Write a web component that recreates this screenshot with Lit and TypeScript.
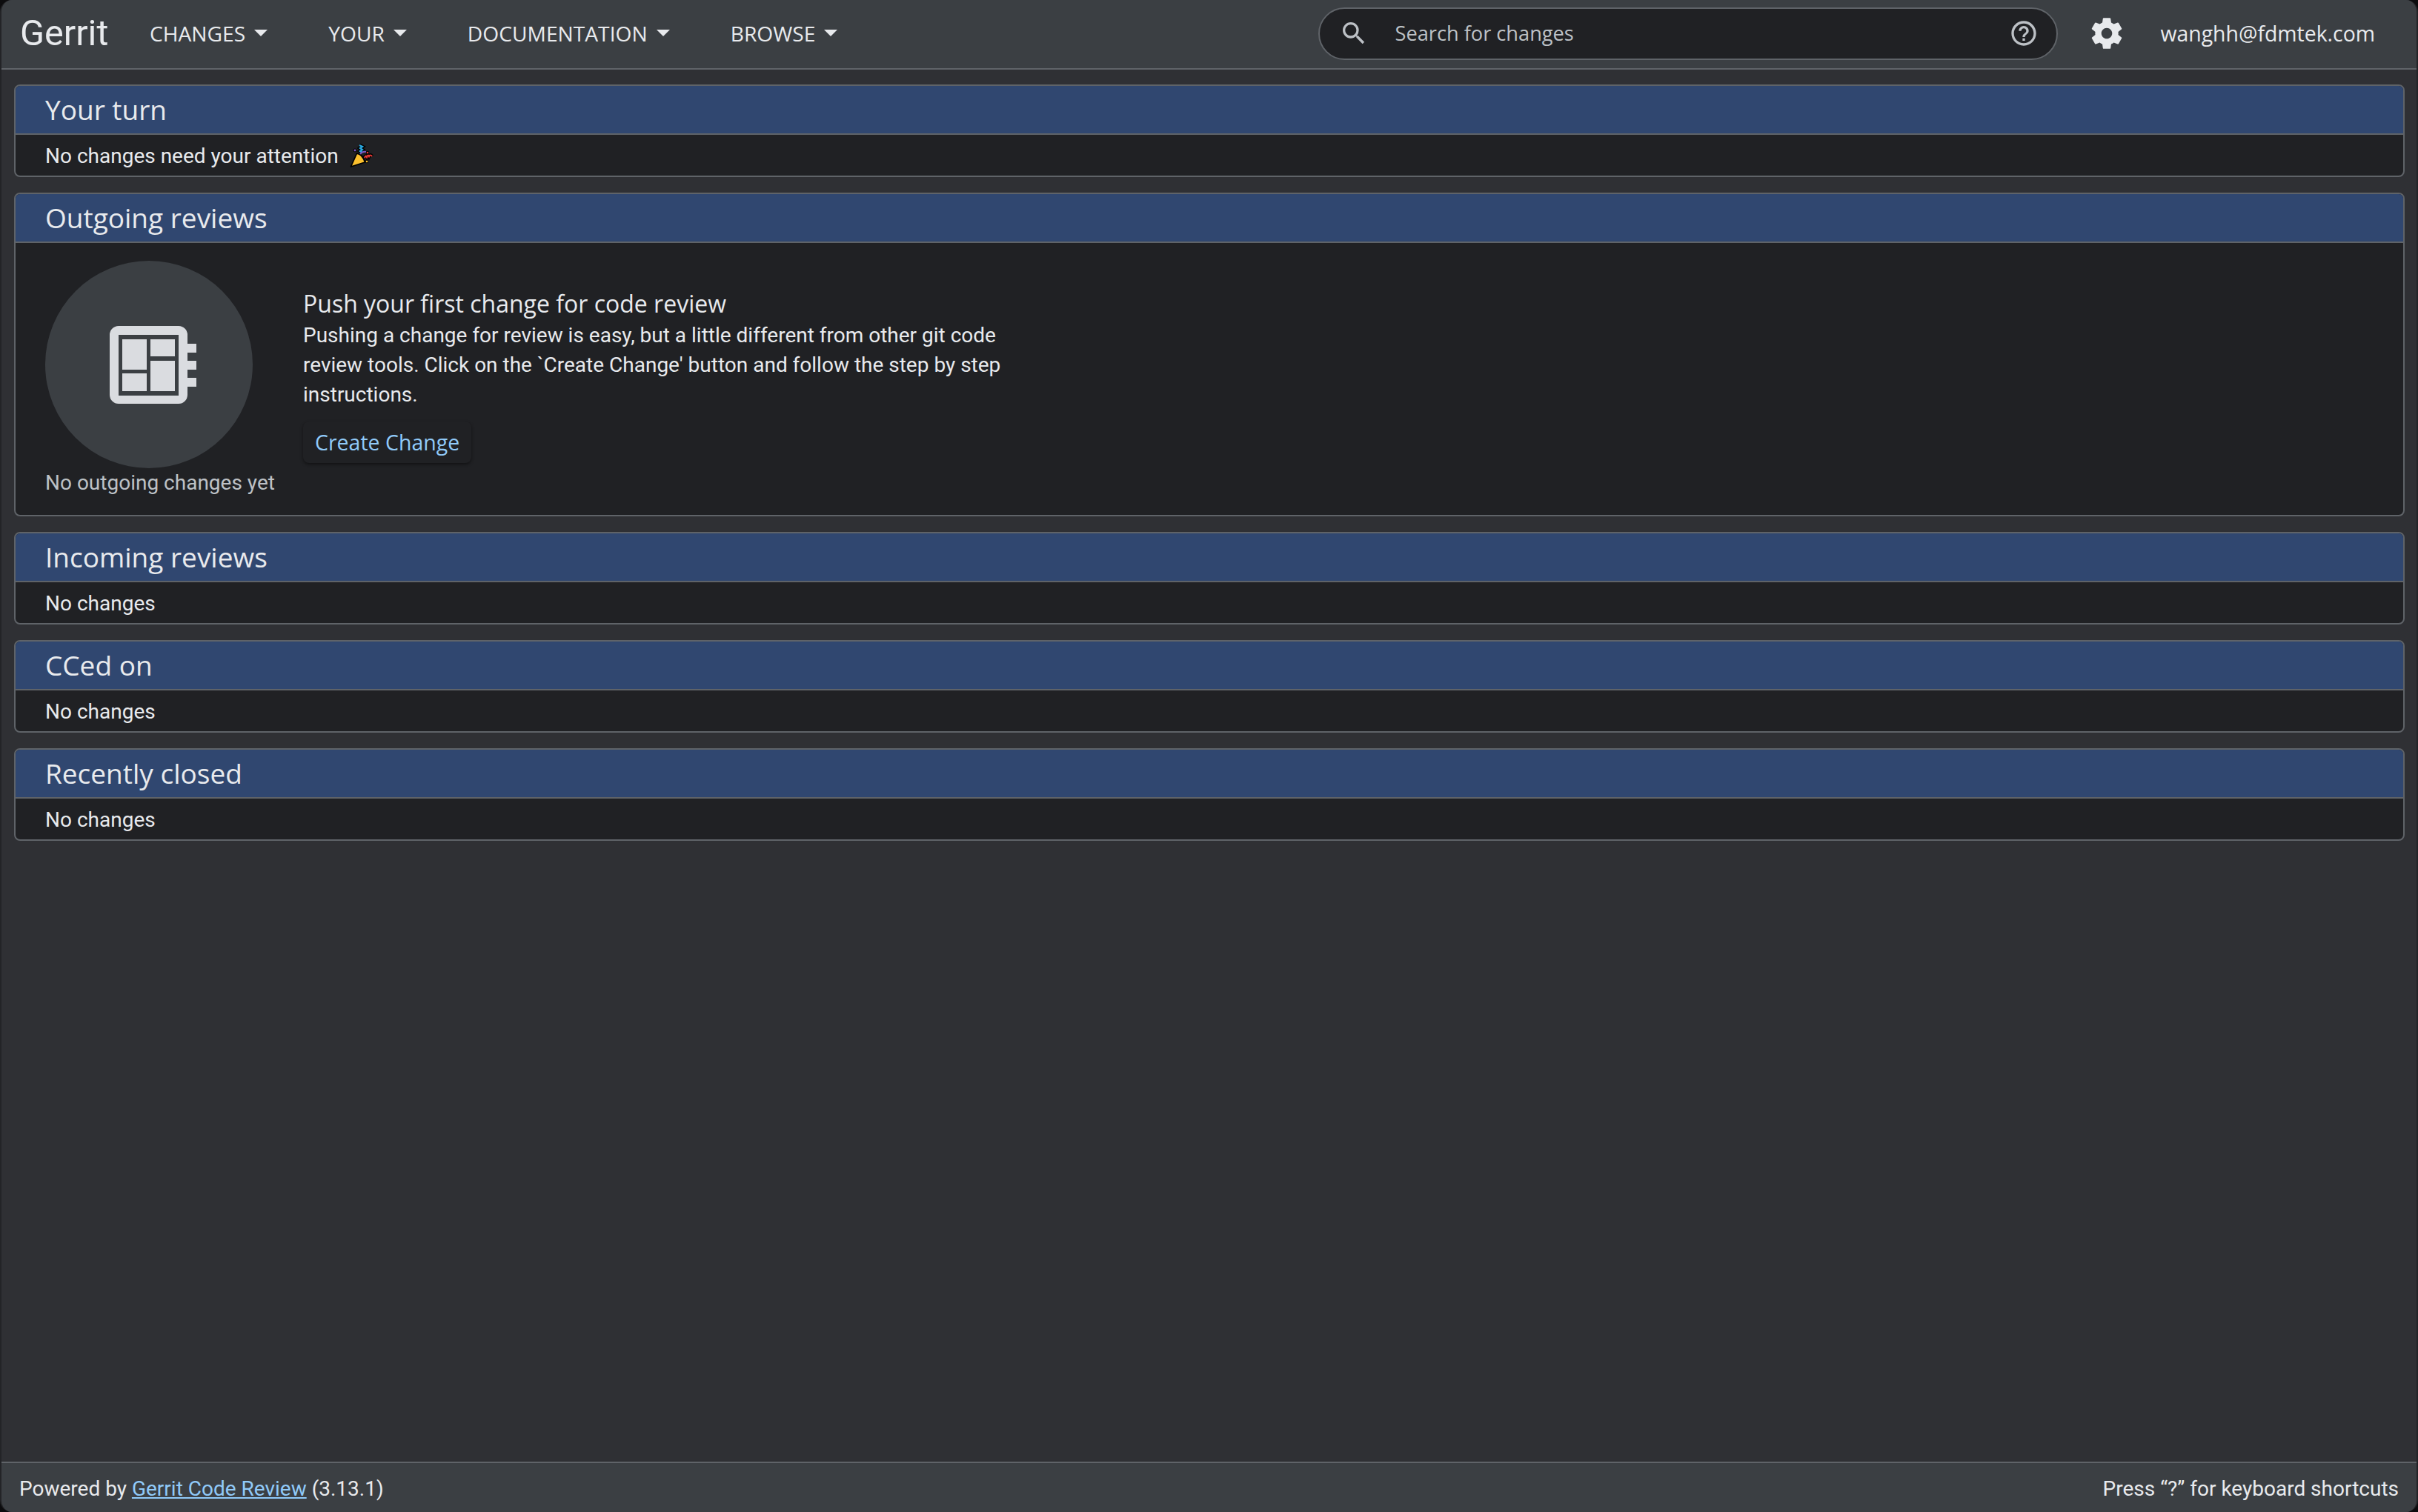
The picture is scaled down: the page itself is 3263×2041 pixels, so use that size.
import { LitElement, html, css, svg } from "lit";
import { customElement } from "lit/decorators.js";

const caret = html`<span class="caret"></span>`;

const noChanges = (title: string) => html`
  <section class="sec">
    <h2>${title}</h2>
    <div class="row">No changes</div>
  </section>`;

@customElement("app-root")
export class AppRoot extends LitElement {
  static styles = css`
    :host { display: block; background: #0c0c0e; }
    * { box-sizing: border-box; }
    .win {
      height: 2041px; display: flex; flex-direction: column; overflow: hidden;
      background: #2f3034; border-radius: 16px; color: #e8eaed;
      border-left: 2px solid #232427; border-right: 2px solid #232427;
      font: 400 28px/40px Roboto, sans-serif;
    }
    header {
      height: 94px; flex: none; display: flex; align-items: center;
      background: #3b3f43; border-bottom: 2px solid #5f6368; padding: 0 56px 2px 25px;
    }
    .logo { font: 400 48.5px/60px Roboto, sans-serif; width: 175px; color: #e8eaed; }
    .nav { display: flex; align-items: center; font: 400 28.2px/40px "Open Sans", sans-serif; }
    .nav span.item { display: flex; align-items: center; }
    .nav .item + .item { margin-left: 82px; }
    .caret {
      width: 0; height: 0; margin-left: 12px; margin-top: -2px;
      border-left: 9px solid transparent; border-right: 9px solid transparent; border-top: 9px solid #e8eaed;
    }
    .search {
      margin-left: auto; width: 998px; height: 71px; display: flex; align-items: center;
      background: #202124; border: 2px solid #5f6368; border-radius: 36px; padding: 0 24px 0 26px;
      color: #bdc1c6; font: 400 27.2px/40px "Open Sans", sans-serif;
    }
    .search svg { display: block; flex: none; }
    .search .ph { margin-left: 36px; flex: 1; }
    .gear { margin-left: 41px; display: block; flex: none; }
    .user { margin-left: 48px; font: 400 28.4px/40px "Open Sans", sans-serif; }
    main { flex: 1; padding: 20px 16px 0 17px; display: flex; flex-direction: column; gap: 21px; }
    .sec {
      border: 2px solid #5f6368; border-radius: 8px; background: #202124; overflow: hidden;
    }
    h2 {
      margin: 0; height: 66px; background: #304770; border-bottom: 2px solid #5f6368;
      padding: 0 40px; font: 400 37px/64px "Open Sans", sans-serif; color: #e8eaed;
    }
    .row { height: 55px; padding: 2px 40px 0; display: flex; align-items: center; }
    .party { margin-left: 15px; display: block; }
    .empty { display: flex; padding: 24px 40px 0; height: 367px; gap: 38px; }
    .side { width: 310px; flex: none; }
    .circle {
      width: 280px; height: 280px; border-radius: 50%; background: #3b3f43;
      display: flex; align-items: center; justify-content: center;
    }
    .circle svg { margin-left: 11px; display: block; }
    .side p { margin: 0; color: #bdc1c6; white-space: nowrap; }
    .copy { padding-top: 37px; width: 945px; }
    .copy h3 { margin: 0; font: 400 32px/42px "Open Sans", sans-serif; }
    .copy p { margin: 2px 0 0; font: 400 28px/40px Roboto, sans-serif; }
    .btn {
      display: inline-block; margin-top: 16px; padding: 0 16px; height: 56px;
      border-radius: 8px; background: #202124; color: #90caf9;
      font: 400 28.5px/56px "Open Sans", sans-serif;
      box-shadow: 0 2px 4px rgba(0,0,0,.45);
    }
    footer {
      height: 68px; flex: none; display: flex; justify-content: space-between; align-items: center;
      background: #3b3f43; border-top: 2px solid #5f6368; padding: 4px 24px 0 24px;
    }
    a { color: #90caf9; text-decoration: underline; }
  `;

  render() {
    return html`
      <div class="win">
        <header>
          <div class="logo">Gerrit</div>
          <div class="nav">
            <span class="item">CHANGES${caret}</span>
            <span class="item">YOUR${caret}</span>
            <span class="item">DOCUMENTATION${caret}</span>
            <span class="item">BROWSE${caret}</span>
          </div>
          <div class="search">
            <svg width="40" height="40" viewBox="0 0 24 24" fill="#bdc1c6"><path d="M15.5 14h-.79l-.28-.27A6.471 6.471 0 0 0 16 9.5 6.5 6.5 0 1 0 9.5 16c1.61 0 3.09-.59 4.23-1.57l.27.28v.79l5 4.99L20.49 19l-4.99-5zm-6 0C7.01 14 5 11.99 5 9.5S7.01 5 9.5 5 14 7.01 14 9.5 11.99 14 9.5 14z"/></svg>
            <span class="ph">Search for changes</span>
            <svg width="40" height="40" viewBox="0 0 24 24" fill="#bdc1c6"><path d="M11 18h2v-2h-2v2zm1-16C6.48 2 2 6.48 2 12s4.48 10 10 10 10-4.48 10-10S17.52 2 12 2zm0 18c-4.41 0-8-3.59-8-8s3.59-8 8-8 8 3.59 8 8-3.59 8-8 8zm0-14c-2.21 0-4 1.79-4 4h2c0-1.1.9-2 2-2s2 .9 2 2c0 2-3 1.75-3 5h2c0-2.25 3-2.5 3-5 0-2.21-1.79-4-4-4z"/></svg>
          </div>
          <svg class="gear" width="50" height="50" viewBox="0 0 24 24" fill="#e8eaed"><path d="M19.43 12.98c.04-.32.07-.64.07-.98s-.03-.66-.07-.98l2.11-1.65c.19-.15.24-.42.12-.64l-2-3.46c-.12-.22-.39-.3-.61-.22l-2.49 1c-.52-.4-1.08-.73-1.69-.98l-.38-2.65C14.46 2.18 14.25 2 14 2h-4c-.25 0-.46.18-.49.42l-.38 2.65c-.61.25-1.17.59-1.69.98l-2.49-1c-.23-.09-.49 0-.61.22l-2 3.46c-.13.22-.07.49.12.64l2.11 1.65c-.04.32-.07.65-.07.98s.03.66.07.98l-2.11 1.65c-.19.15-.24.42-.12.64l2 3.46c.12.22.39.3.61.22l2.49-1c.52.4 1.08.73 1.69.98l.38 2.65c.03.24.24.42.49.42h4c.25 0 .46-.18.49-.42l.38-2.65c.61-.25 1.17-.59 1.69-.98l2.49 1c.23.09.49 0 .61-.22l2-3.46c.12-.22.07-.49-.12-.64l-2.11-1.65zM12 15.5c-1.93 0-3.5-1.57-3.5-3.5s1.57-3.5 3.5-3.5 3.5 1.57 3.5 3.5-1.57 3.5-3.5 3.5z"/></svg>
          <div class="user">wanghh@fdmtek.com</div>
        </header>
        <main>
          <section class="sec">
            <h2>Your turn</h2>
            <div class="row">No changes need your attention
              <svg class="party" width="32" height="33" viewBox="0 0 32 33">
                <path d="M13 2 l4 2 -3 2 3 2 -3 2 3 2" fill="none" stroke="#000" stroke-width="5"/>
                <path d="M13 2 l4 2 -3 2 3 2 -3 2 3 2" fill="none" stroke="#29a8e0" stroke-width="2.2"/>
                <path d="M20 19 q1.500-4 3-1 q1.500-4 3-1 q1.500-3 4 0" fill="none" stroke="#000" stroke-width="5"/>
                <path d="M20 19 q1.500-4 3-1 q1.500-4 3-1 q1.500-3 4 0" fill="none" stroke="#e53935" stroke-width="2.2"/>
                <path d="M1.500 31 L9.500 13 Q17 14 20.500 25 Z" fill="#fbc02d" stroke="#000" stroke-width="1.800" stroke-linejoin="round"/>
                <path d="M14 14 q3-4 8-3" fill="none" stroke="#7e57c2" stroke-width="2"/>
                <circle cx="24" cy="12" r="2.2" fill="#000"/><circle cx="24" cy="12" r="1.300" fill="#e53935"/>
                <circle cx="7" cy="9" r="2.400" fill="#000"/><circle cx="7" cy="9" r="1.400" fill="#7e57c2"/>
                <circle cx="23" cy="24" r="2.200" fill="#000"/><circle cx="23" cy="24" r="1.300" fill="#fbc02d"/>
              </svg>
            </div>
          </section>
          <section class="sec">
            <h2>Outgoing reviews</h2>
            <div class="empty">
              <div class="side">
                <div class="circle">
                  <svg width="117" height="105" viewBox="0 0 117 105">
                    ${svg`<path fill-rule="evenodd" fill="#dadce0" d="M12 0H93a12 12 0 0 1 12 12V24H117V36H105V47H117V59H105V70H117V82H105V93a12 12 0 0 1-12 12H12a12 12 0 0 1-12-12V12A12 12 0 0 1 12 0ZM12 12V94H93V12Z"/>
                    <rect x="17" y="18" width="33" height="41" fill="#dadce0"/>
                    <rect x="55" y="18" width="33" height="23" fill="#dadce0"/>
                    <rect x="17" y="64" width="33" height="24" fill="#dadce0"/>
                    <rect x="55" y="47" width="33" height="41" fill="#dadce0"/>`}
                  </svg>
                </div>
                <p>No outgoing changes yet</p>
              </div>
              <div class="copy">
                <h3>Push your first change for code review</h3>
                <p>Pushing a change for review is easy, but a little different from other git code review tools. Click on the \`Create Change' button and follow the step by step instructions.</p>
                <span class="btn">Create Change</span>
              </div>
            </div>
          </section>
          ${noChanges("Incoming reviews")}
          ${noChanges("CCed on")}
          ${noChanges("Recently closed")}
        </main>
        <footer>
          <div>Powered by <a>Gerrit Code Review</a> (3.13.1)</div>
          <div>Press “?” for keyboard shortcuts</div>
        </footer>
      </div>
    `;
  }
}
